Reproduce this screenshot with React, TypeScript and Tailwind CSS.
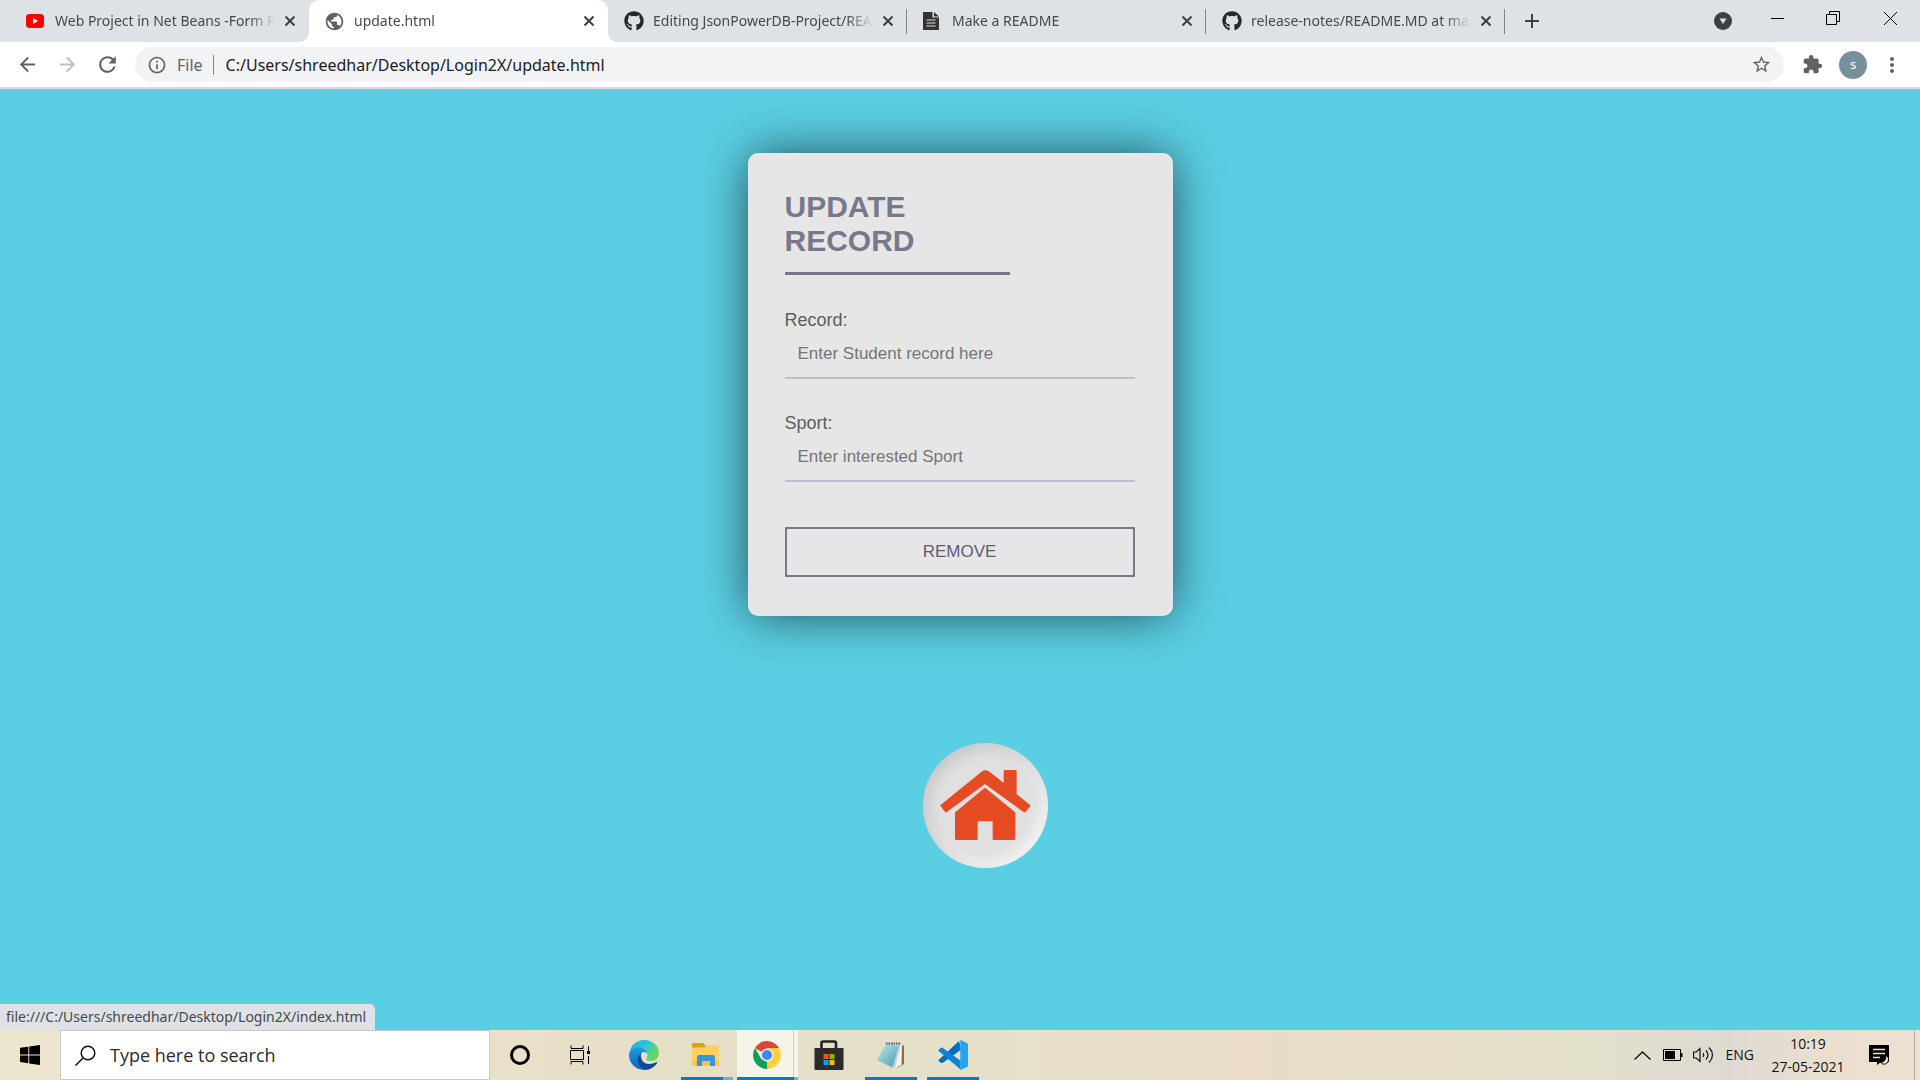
import type { ReactNode } from "react";
import { FaGithub } from "react-icons/fa";
import {
  MdAdd,
  MdArrowBack,
  MdArrowForward,
  MdExtension,
  MdInfoOutline,
  MdMoreVert,
  MdPublic,
  MdRefresh,
  MdStarBorder,
} from "react-icons/md";

function YoutubeIcon() {
  return (
    <svg width="18" height="14" viewBox="0 0 18 14" aria-hidden="true">
      <rect width="18" height="14" rx="3.5" fill="#ff0000" />
      <path d="M7 4l5 3-5 3z" fill="#fff" />
    </svg>
  );
}

function DocIcon() {
  return (
    <svg width="16" height="18" viewBox="0 0 16 18" aria-hidden="true">
      <path d="M0 0h9.500v5.500H16V18H0z M11 0l5 4.500h-5z" fill="#333" />
      <path d="M3.500 8h9M3.500 11h9M3.500 14h9" stroke="#dee1e6" strokeWidth="1.200" />
    </svg>
  );
}

type TabProps = { icon: ReactNode; title: string; active?: boolean; divider?: boolean };

function Tab({ icon, title, active, divider }: TabProps) {
  return (
    <div
      className={
        active
          ? "relative flex h-full w-[299px] min-w-0 items-center rounded-t-[10px] bg-white pl-4 pr-2.5 before:absolute before:bottom-0 before:-left-2.5 before:size-2.5 before:bg-[radial-gradient(circle_at_0_0,transparent_10px,white_10px)] after:absolute after:bottom-0 after:-right-2.5 after:size-2.5 after:bg-[radial-gradient(circle_at_100%_0,transparent_10px,white_10px)]"
          : "relative flex h-full w-[299px] min-w-0 items-center pl-4 pr-2.5"
      }
    >
      <button className="flex min-w-0 flex-1 items-center text-left">
        <span className="flex w-[29px] shrink-0 items-center">{icon}</span>
        <span className="flex-1 overflow-hidden whitespace-nowrap text-sm text-[#45494d] [mask-image:linear-gradient(to_right,black_88%,transparent)]">
          {title}
        </span>
      </button>
      <button aria-label={`Close ${title}`} className="ml-1.5 flex size-[18px] items-center justify-center text-[#3c4043]">
        <svg width="10" height="10" viewBox="0 0 10 10" stroke="currentColor" strokeWidth="2">
          <path d="M.5.5l9 9M9.500.5l-9 9" />
        </svg>
      </button>
      {divider && <span className="absolute right-0 top-[9px] h-[25px] w-px bg-[#80868b]" />}
    </div>
  );
}

function TabStrip() {
  return (
    <header className="flex h-[42px] bg-[#dee1e6] pl-2.5">
      <Tab icon={<YoutubeIcon />} title="Web Project in Net Beans -Form Project" />
      <Tab icon={<MdPublic size={21} color="#5f6368" className="-ml-px" />} title="update.html" active />
      <Tab icon={<FaGithub size={20} color="#24292e" />} title="Editing JsonPowerDB-Project/README.md" divider />
      <Tab icon={<DocIcon />} title="Make a README" divider />
      <Tab icon={<FaGithub size={20} color="#24292e" />} title="release-notes/README.MD at master" divider />
      <button aria-label="New tab" className="ml-[15px] text-[#3c4043]">
        <MdAdd size={24} />
      </button>
      <div className="ml-auto flex items-start">
        <button aria-label="Search tabs" className="mr-3 flex h-full w-7 items-center justify-center">
          <svg width="18" height="18" viewBox="0 0 18 18">
            <circle cx="9" cy="9" r="9" fill="#3c4043" />
            <path d="M5.500 6.500h7L9 12z" fill="#dee1e6" />
          </svg>
        </button>
        <button aria-label="Minimize" className="flex h-9 w-14 items-center justify-center">
          <span className="h-px w-[13px] bg-black" />
        </button>
        <button aria-label="Restore" className="flex h-9 w-14 items-center justify-center">
          <svg width="14" height="14" viewBox="0 0 14 14" fill="none" stroke="#000">
            <path d="M.5 3.500h10v10H.5zM3.500 3.500V.5h10v10h-3" />
          </svg>
        </button>
        <button aria-label="Close window" className="flex h-9 w-[59px] items-center justify-center">
          <svg width="13" height="13" viewBox="0 0 13 13" stroke="#000">
            <path d="M0 0l13 13M13 0L0 13" />
          </svg>
        </button>
      </div>
    </header>
  );
}

function Toolbar() {
  return (
    <nav className="flex h-[47px] items-center border-b-2 border-[#d9dbdf] bg-white pl-[7px] pr-[15px] text-[#5f6368]">
      <button aria-label="Back" className="flex w-10 justify-center">
        <MdArrowBack size={23} />
      </button>
      <button aria-label="Forward" className="flex w-10 justify-center text-[#bcbec1]">
        <MdArrowForward size={23} />
      </button>
      <button aria-label="Reload" className="flex w-10 justify-center">
        <MdRefresh size={25} />
      </button>
      <div className="ml-2 flex h-[35px] flex-1 items-center rounded-full bg-[#f1f3f4] pl-3 pr-3">
        <MdInfoOutline size={20} />
        <label htmlFor="address" className="ml-2.5 border-r border-[#80868b] pr-2.5 text-base leading-5">
          File
        </label>
        <input
          id="address"
          className="ml-3 flex-1 bg-transparent text-base text-[#202124] outline-none"
          defaultValue="C:/Users/shreedhar/Desktop/Login2X/update.html"
        />
        <button aria-label="Bookmark this page">
          <MdStarBorder size={21} />
        </button>
      </div>
      <button aria-label="Extensions" className="ml-[17px] flex w-[22px] justify-center">
        <MdExtension size={21} />
      </button>
      <button className="ml-4 flex size-7 items-center justify-center rounded-full bg-[#78909c] text-[13px] text-white">s</button>
      <button aria-label="Menu" className="ml-3 flex w-[26px] justify-center">
        <MdMoreVert size={24} />
      </button>
    </nav>
  );
}

function Field({ id, label, placeholder }: { id: string; label: string; placeholder: string }) {
  return (
    <div className="flex flex-col">
      <label htmlFor={id} className="text-lg leading-5 text-[#5c5c5c]">
        {label}
      </label>
      <input
        id={id}
        placeholder={placeholder}
        className="h-[49px] border-b-2 border-[#bdbdd3] bg-transparent px-[13px] text-[17px] outline-none placeholder:text-[#757575]"
      />
    </div>
  );
}

function UpdateForm() {
  return (
    <form className="mt-16 w-[425px] rounded-[10px] bg-[#e6e6e6] pb-[39px] pl-[37px] pr-[38px] pt-[37px] font-['Liberation_Sans',Arial,sans-serif] shadow-[0_0_50px_-3px_rgba(0,0,0,0.68)]">
      <h1 className="w-[225px] border-b-[3px] border-[#78788c] pb-3.5 text-[30px] font-bold leading-[34px] text-[#78788c]">
        UPDATE RECORD
      </h1>
      <div className="mt-[35px] flex flex-col gap-[34px]">
        <Field id="record" label="Record:" placeholder="Enter Student record here" />
        <Field id="sport" label="Sport:" placeholder="Enter interested Sport" />
      </div>
      <button type="button" className="mt-[45px] h-[50px] w-full border-2 border-[#78788c] text-[17px] text-[#5d5d72]">
        REMOVE
      </button>
    </form>
  );
}

function HomeLink() {
  return (
    <a
      href="#home"
      aria-label="Home"
      className="ml-[51px] mt-[127px] size-[125px] rounded-full bg-[#e0e0e0] shadow-[inset_5px_5px_14px_rgba(0,0,0,0.12),inset_-5px_-5px_14px_rgba(255,255,255,0.7)]"
    >
      <svg viewBox="0 0 375 375" fill="#e64c24" stroke="#e64c24" strokeWidth="8" strokeLinejoin="round">
        <path d="M186 118L69 204L56 188L178 89Q187 82 196 89L246 128V85H277V155L318 188L304 204Z" />
        <path d="M186 139L273 210V287H213V235Q213 231 209 231H164Q160 231 160 235V287H100V210Z" />
      </svg>
    </a>
  );
}

function EdgeIcon() {
  return (
    <svg width="30" height="30" viewBox="0 0 30 30">
      <defs>
        <linearGradient id="edgeTop" x1="0" y1="0" x2="1" y2=".6">
          <stop offset="0" stopColor="#1fa8e8" />
          <stop offset=".5" stopColor="#32c4d6" />
          <stop offset="1" stopColor="#66dc4a" />
        </linearGradient>
        <linearGradient id="edgeLeft" x1="0" y1="0" x2="0" y2="1">
          <stop offset="0" stopColor="#1c9de0" />
          <stop offset="1" stopColor="#0d62bd" />
        </linearGradient>
      </defs>
      <path d="M.5 13C1.500 5 8 0 15 0c9 0 15 6.500 15 13 0 5-3.500 8-8 8-4 0-5.500-1.700-4.500-3 1-1.200 1.200-2 1-3.500C18 10 14 8 10 8 5 8 1.500 10.500.5 13z" fill="url(#edgeTop)" />
      <path d="M0 15c0-5 4.500-7.500 9.500-7.500 5 0 8.500 3 9 6.500-1.500-2.500-4-2.500-5.500-1.500-5 3.500-3 14 5.500 17.100C8 31.500 0 24 0 15z" fill="url(#edgeLeft)" />
      <path d="M12.500 12.500c-2 5 1 11.500 7.500 11.500 3 0 5-.8 7.500-2 .7-.2 1 .3.600 1-2.600 4-6.600 6.500-10.600 6.700C10 28.500 5 19 12.500 12.500z" fill="#114a94" />
    </svg>
  );
}

function ExplorerIcon() {
  return (
    <svg width="28" height="24" viewBox="0 0 28 24">
      <path d="M1 0h10l3 3v4H0V1z" fill="#e09d0d" />
      <path d="M0 4.500h12L14.500 2.500H27v20H0z" fill="#ffd163" />
      <path d="M0 18h27v4.500H0z" fill="#fbc53f" />
      <path d="M5 23V14q0-2 2-2h14q2 0 2 2v9h-5v-5h-8v5z" fill="#3b93d8" />
    </svg>
  );
}

function ChromeIcon() {
  return (
    <svg width="28" height="28" viewBox="0 0 28 28">
      <path d="M14 14L1.900 7A14 14 0 0 1 26.100 7z" fill="#db4437" />
      <path d="M14 14V7H26.100A14 14 0 0 1 14 28z" fill="#ffcd40" />
      <path d="M14 28A14 14 0 0 1 1.900 7L8 17.500l6 3.500 3.500-1z" fill="#0f9d58" />
      <path d="M14 28l6.100-10.500L14 14z" fill="#ffcd40" />
      <circle cx="14" cy="14" r="6.500" fill="#f1f1f1" />
      <circle cx="14" cy="14" r="5" fill="#4285f4" />
    </svg>
  );
}

function StoreIcon() {
  return (
    <svg width="30" height="30" viewBox="0 0 30 30">
      <path d="M7.500 9V3q0-1.500 1.500-1.500h11.500q1.500 0 1.500 1.500v6" fill="none" stroke="#222" strokeWidth="2.600" />
      <path d="M.5 8h29v21q0 1-1 1h-27q-1 0-1-1z" fill="#2b2b2b" />
      <path d="M9.500 14h5v5h-5z" fill="#f25022" />
      <path d="M15.500 14h5v5h-5z" fill="#7fba00" />
      <path d="M9.500 20h5v5h-5z" fill="#00a4ef" />
      <path d="M15.500 20h5v5h-5z" fill="#ffb900" />
    </svg>
  );
}

function NotepadIcon() {
  return (
    <svg width="28" height="27" viewBox="0 0 28 27">
      <defs>
        <linearGradient id="notepad" x1="0" y1="0" x2="1" y2="1">
          <stop offset="0" stopColor="#c3e6ea" />
          <stop offset="1" stopColor="#429cb3" />
        </linearGradient>
      </defs>
      <path d="M23 2l4 2v18l-7 4z" fill="#8b6d3c" />
      <path d="M20 3h5l-.5 20-6 3z" fill="#f2f2f2" />
      <path d="M9 2h15l-6 24-1-2z" fill="#c9d3d6" />
      <path d="M8.500 2.500L22 3.500 15.500 25.500 0 18z" fill="url(#notepad)" />
      <path d="M9 1.500h15" stroke="#555" strokeWidth="2" strokeDasharray="1.500 1" />
    </svg>
  );
}

function CodeIcon() {
  return (
    <svg width="30" height="30" viewBox="0 0 30 30">
      <path d="M2.500 20.500L22 3.500V10L5 22.500q-.8.500-1.500 0l-2-1.200z" fill="#0065a9" />
      <path d="M.6 20L21 1l2 8.500L4.500 23q-.8.400-1.500-.2L.6 21q-.6-.5 0-1z" fill="#0071ba" />
      <path d="M.6 10L3 7.800q.7-.5 1.500 0L23 21l-1 8L.6 11q-.6-.5 0-1z" fill="#0a84d0" />
      <path d="M21.500.2q.8-.4 1.500 0l6 2.800q1 .5 1 1.500v21q0 1-1 1.500l-6 2.800q-.8.400-1.500-.2.800.2.800-1.100v-27q0-1-.8-1.300z" fill="#27a5f2" />
    </svg>
  );
}

type TaskProps = { label: string; children: ReactNode; running?: boolean; stacked?: boolean; active?: boolean };

function TaskButton({ label, children, running, stacked, active }: TaskProps) {
  return (
    <button
      aria-label={label}
      className={
        active
          ? "relative flex h-full w-[61px] items-center bg-[#f6f3e9] pl-4"
          : "relative flex h-full w-[62px] items-center justify-center"
      }
    >
      {children}
      {running && !stacked && <span className="absolute inset-x-[5px] bottom-0 h-[3px] bg-[#0078d7]" />}
      {stacked && (
        <span className={active ? "absolute inset-x-0 bottom-0 flex h-[3px]" : "absolute bottom-0 left-1.5 right-1 flex h-[3px]"}>
          <span className="flex-1 bg-[#0078d7]" />
          <span className={active ? "w-1 bg-[#6aaee8]" : "w-2.5 bg-[#6aaee8]"} />
        </span>
      )}
      {active && <span className="absolute right-1 top-0 h-[47px] w-px bg-[#d3cec0]" />}
    </button>
  );
}

function Taskbar() {
  return (
    <footer className="flex h-[50px] bg-[linear-gradient(90deg,#ede6cf_0%,#eadfc8_27%,#e4dfc8_40%,#e6e0ca_52%,#eadcc6_65%,#e3e0cb_82%,#dedad2_90%,#ecdfcf_96%,#eee0d0_100%)] font-['Open_Sans','Noto_Sans',sans-serif]">
      <button aria-label="Start" className="flex w-[60px] items-center justify-center">
        <svg width="20" height="20" viewBox="0 0 20 20">
          <path d="M0 2.800L8.300 1.700V9.500H0zM9.200 1.500L20 0v9.500H9.200zM0 10.400h8.300v7.900L0 17.100zM9.200 10.400H20V20L9.200 18.400z" />
        </svg>
      </button>
      <div className="flex w-[430px] items-center border border-[#c8c8cc] bg-white pl-3.5">
        <svg width="21" height="21" viewBox="0 0 21 21" fill="none" stroke="#111" strokeWidth="1.500">
          <circle cx="13" cy="8" r="6.800" />
          <path d="M8 13L.5 20.500" />
        </svg>
        <input
          aria-label="Type here to search"
          placeholder="Type here to search"
          className="ml-3.5 min-w-0 flex-1 bg-transparent text-lg outline-none placeholder:text-[#2b2b2b]"
        />
      </div>
      <button aria-label="Cortana" className="flex w-[60px] items-center justify-center">
        <span className="size-5 rounded-full border-[3px] border-black" />
      </button>
      <button aria-label="Task view" className="flex w-[61px] items-center justify-center">
        <svg width="21" height="20" viewBox="0 0 21 20" fill="none" stroke="#000">
          <path d="M.5 5.500h13v9H.5zM1 .5v3h12v-3M1 19.500v-3h12v3M18.500 1v5M18.500 11v8" />
          <path d="M17 6h3v3h-3z" fill="#000" stroke="none" />
        </svg>
      </button>
      <div className="ml-0.5 flex">
        <TaskButton label="Microsoft Edge"><EdgeIcon /></TaskButton>
        <TaskButton label="File Explorer" stacked><ExplorerIcon /></TaskButton>
        <TaskButton label="Google Chrome" active stacked><ChromeIcon /></TaskButton>
        <TaskButton label="Microsoft Store"><StoreIcon /></TaskButton>
        <TaskButton label="Notepad" running><NotepadIcon /></TaskButton>
        <TaskButton label="Visual Studio Code" running><CodeIcon /></TaskButton>
      </div>
      <div className="ml-auto flex items-center text-[#111]">
        <button aria-label="Show hidden icons" className="mr-3">
          <svg width="17" height="9" viewBox="0 0 17 9" fill="none" stroke="#111" strokeWidth="1.300">
            <path d="M.5 8.500l8-7.500 8 7.500" />
          </svg>
        </button>
        <button aria-label="Battery" className="mr-2.5">
          <svg width="20" height="12" viewBox="0 0 20 12" fill="none" stroke="#000">
            <path d="M.5.5h17v11H.5z" />
            <path d="M2 2h10v8H2zM18 4h1.500v4H18z" fill="#000" stroke="none" />
          </svg>
        </button>
        <button aria-label="Volume" className="mr-3">
          <svg width="21" height="18" viewBox="0 0 21 18" fill="none" stroke="#111" strokeWidth="1.200">
            <path d="M.6 6h2.600L7 2.500v13L3.200 12H.6zM10 7q1.500 2 0 4M13 4.500q4 4.500 0 9M16 1.500q7 7.500 0 15" />
          </svg>
        </button>
        <button className="mr-4 text-sm">ENG</button>
        <button className="flex w-[76px] flex-col items-center text-sm leading-[23px]">
          <span>10:19</span>
          <span>27-05-2021</span>
        </button>
        <button aria-label="Notifications" className="ml-[23px] mr-6">
          <svg width="21" height="20" viewBox="0 0 21 20">
            <path d="M0 0h20v17h-8l-4 3v-3H0z" />
            <path d="M4 4.500h12M4 8.500h12M4 12.500h7" stroke="#ece0d0" strokeWidth="1.300" />
            <path d="M16.500 10.500c3.500 1 4 5 1.500 7.500-2 1.800-5 1.500-6.500-.8 3 .5 6-2.500 5-6.700z" fill="#ece0d0" stroke="#000" />
          </svg>
        </button>
        <span className="mr-[5px] h-full w-px bg-[#b5aa9f]" />
      </div>
    </footer>
  );
}

export default function App() {
  return (
    <div className="flex min-h-screen flex-col font-['Noto_Sans','Open_Sans',sans-serif]">
      <TabStrip />
      <Toolbar />
      <main className="relative flex flex-1 flex-col items-center bg-[#5acee2]">
        <UpdateForm />
        <HomeLink />
        <div className="absolute bottom-0 left-0 rounded-tr-md border-r border-t border-[#9fb4bf] bg-[#dee1e6] pl-1.5 pr-[9px] text-sm leading-[26px] text-[#45494d]">
          file:///C:/Users/shreedhar/Desktop/Login2X/index.html
        </div>
      </main>
      <Taskbar />
    </div>
  );
}
